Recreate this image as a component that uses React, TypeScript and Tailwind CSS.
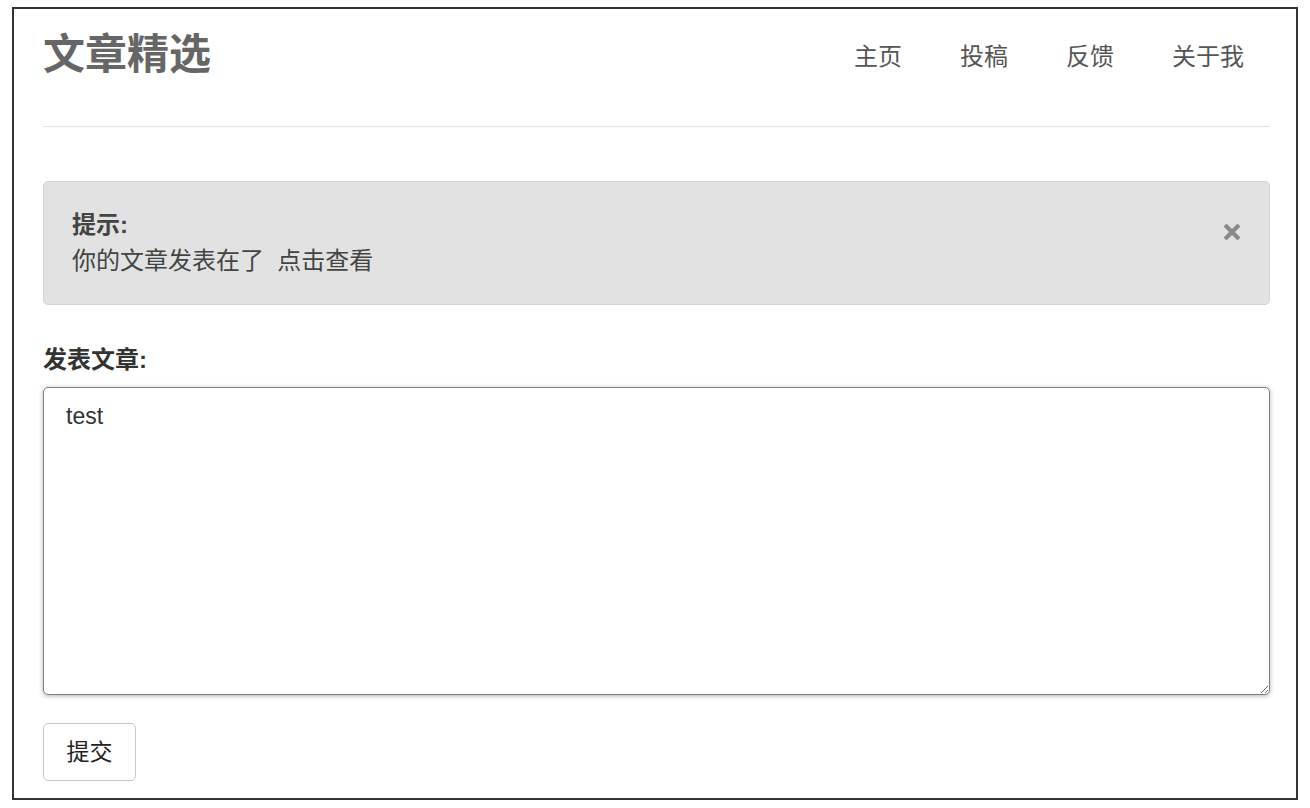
import { useState } from "react"

const font = "font-['Liberation_Sans','Noto_Sans_CJK_SC',sans-serif]"

export default function App() {
  const [text, setText] = useState("test")
  const nav = ["主页", "投稿", "反馈", "关于我"]

  return (
    <div className={`w-[1310px] h-[808px] bg-white pl-3 pt-[7px] ${font}`}>
      <div className="w-[1286px] h-[793px] border-2 border-[#333] bg-white pl-[29px] pr-[26px]">
        <header className="flex items-center justify-between h-[92px]">
          <h1 className="text-[42px] leading-none font-bold text-[#666]">文章精选</h1>
          <nav className="flex gap-[58px] pr-[26px] pt-[4px]">
            {nav.map((item) => (
              <a key={item} className="text-[24px] leading-none text-[#555]">
                {item}
              </a>
            ))}
          </nav>
        </header>
        <hr className="mt-[25px] border-0 border-t border-[#e3e3e3]" />

        <div className="mt-[54px] flex justify-between items-start h-[124px] rounded-[5px] border border-[#d4d4d4] bg-[#e2e2e2] pl-[28px] pr-[28px] pt-[25px] text-[24px] leading-[36px] text-[#444]">
          <div>
            <div className="font-bold">提示:</div>
            <div>你的文章发表在了&nbsp; 点击查看</div>
          </div>
          <svg width="18" height="18" viewBox="0 0 18 18" className="mt-[16px]">
            <path d="M2 2 L16 16 M16 2 L2 16" stroke="#8a8a8a" strokeWidth="4" />
          </svg>
        </div>

        <label className="block mt-[37px] text-[24px] leading-[36px] font-bold text-[#333]">发表文章:</label>
        <textarea
          value={text}
          onChange={(e) => setText(e.target.value)}
          className={`mt-[9px] block w-full h-[308px] rounded-[5px] border border-[#7f7f7f] bg-white pl-[22px] pt-[10px] text-[23px] leading-[36px] text-[#333] shadow-[0_1px_5px_rgba(0,0,0,0.3)] outline-none ${font}`}
        />

        <button className="mt-[28px] w-[93px] h-[58px] rounded-[5px] border border-[#c8c8c8] bg-white text-[23px] text-[#222]">
          提交
        </button>
      </div>
    </div>
  )
}
